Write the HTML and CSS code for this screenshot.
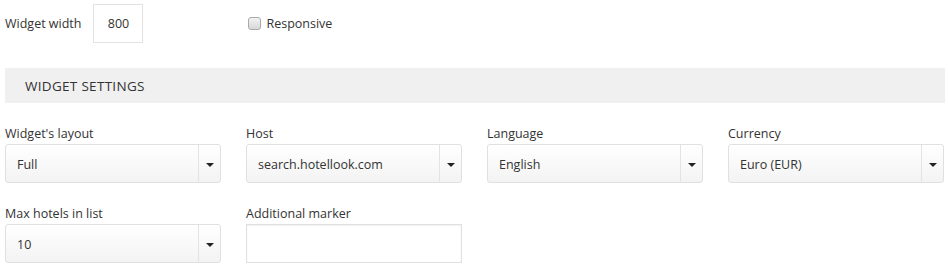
FILE: index.html
```html
<!DOCTYPE html>
<html lang="en">
<head>
    <meta charset="UTF-8">
    <title>Widget settings</title>
    <link rel="stylesheet" href="styles.css">
</head>
<body>
    <div class="vidzhet-form">
        <div class="shirina-row">
            <label class="shirina-label" for="shirina">Widget width</label>
            <input type="text" id="shirina" class="shirina-input" value="800">
            <label class="adaptiv">
                <span class="flazhok"></span>
                Responsive
            </label>
        </div>

        <div class="nastroiki-head">WIDGET SETTINGS</div>

        <div class="nastroiki-grid">
            <div class="pole">
                <label>Widget's layout</label>
                <div class="vybor"><span>Full</span><i class="strelka"></i></div>
            </div>
            <div class="pole">
                <label>Host</label>
                <div class="vybor"><span>search.hotellook.com</span><i class="strelka"></i></div>
            </div>
            <div class="pole">
                <label>Language</label>
                <div class="vybor"><span>English</span><i class="strelka"></i></div>
            </div>
            <div class="pole">
                <label>Currency</label>
                <div class="vybor"><span>Euro (EUR)</span><i class="strelka"></i></div>
            </div>
            <div class="pole">
                <label>Max hotels in list</label>
                <div class="vybor"><span>10</span><i class="strelka"></i></div>
            </div>
            <div class="pole">
                <label>Additional marker</label>
                <input type="text" class="marker-input">
            </div>
        </div>
    </div>
</body>
</html>
```

FILE: styles.css
```css
* {
    margin: 0;
    padding: 0;
    box-sizing: border-box;
    font-family: 'Open Sans', sans-serif;
}

body {
    background: #fff;
    color: #333;
    font-size: 12.5px;
}

.vidzhet-form {
    padding: 4px 3px 0 5px;
    width: 948px;
}

.shirina-row {
    display: flex;
    align-items: center;
    height: 39px;
}

.shirina-input {
    width: 50px;
    height: 39px;
    margin-left: 12px;
    border: 1px solid #e2e2e2;
    text-align: center;
    font-size: 12.5px;
    color: #333;
    outline: none;
}

.adaptiv {
    display: flex;
    align-items: center;
    margin-left: 105px;
}

.flazhok {
    width: 13px;
    height: 13px;
    margin-right: 5px;
    border: 1px solid #aaa;
    border-radius: 3px;
    background: linear-gradient(#f2f2f2, #d8d8d8);
}

.nastroiki-head {
    margin-top: 25px;
    height: 35px;
    line-height: 36px;
    padding-left: 20px;
    background: #f0f0f0;
    font-size: 13.5px;
    letter-spacing: 0.3px;
    color: #333;
    width: 940px;
}

.nastroiki-grid {
    display: grid;
    grid-template-columns: repeat(4, 216px);
    column-gap: 25px;
    row-gap: 22px;
    margin-top: 22px;
}

.pole label {
    display: block;
    height: 18px;
    line-height: 18px;
    margin-bottom: 1px;
}

.vybor {
    position: relative;
    height: 39px;
    border: 1px solid #e0e0e0;
    border-radius: 3px;
    background: linear-gradient(#fff, #f3f3f3);
    display: flex;
    align-items: center;
    padding: 2px 0 0 11px;
}

.strelka {
    position: absolute;
    top: 0;
    right: 0;
    width: 22px;
    height: 37px;
    border-left: 1px solid #e3e3e3;
}

.strelka::after {
    content: '';
    position: absolute;
    left: 7px;
    top: 18px;
    border-left: 4px solid transparent;
    border-right: 4px solid transparent;
    border-top: 4px solid #222;
}

.marker-input {
    width: 216px;
    height: 39px;
    border: 1px solid #e0e0e0;
    box-shadow: inset 0 1px 2px rgba(0, 0, 0, 0.06);
    outline: none;
}
```
